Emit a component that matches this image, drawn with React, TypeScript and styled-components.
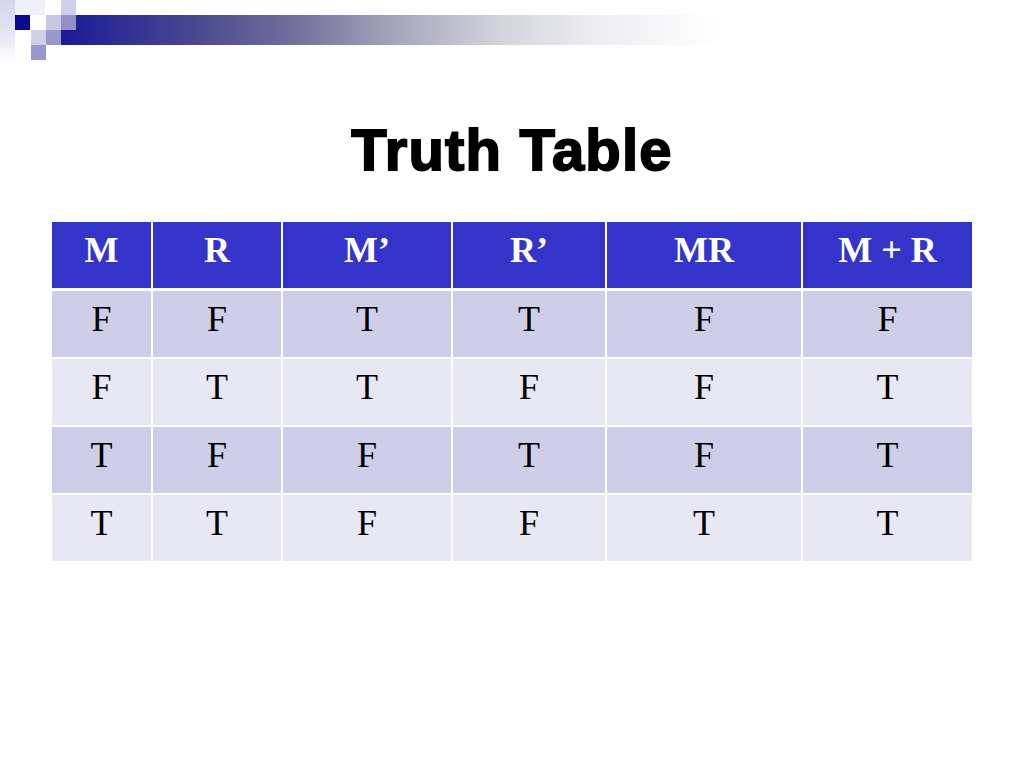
import React from "react";
import styled, { createGlobalStyle } from "styled-components";

const Global = createGlobalStyle`
  html, body { margin: 0; padding: 0; background: #ffffff; }
  body { width: 1024px; height: 768px; overflow: hidden; }
`;

const Page = styled.div`
  width: 1024px;
  height: 768px;
  background: #ffffff;
  display: flex;
  flex-direction: column;
`;

const Banner = styled.svg`
  display: block;
  width: 1024px;
  height: 60px;
  flex: none;
`;

const Title = styled.h1`
  margin: 61px 0 0 0;
  font-family: "Liberation Sans", Arial, sans-serif;
  font-weight: 700;
  font-size: 58px;
  line-height: 58px;
  height: 58px;
  text-align: center;
  color: #000;
  -webkit-text-stroke: 1.8px #000;
  letter-spacing: 1.2px;
`;

const Table = styled.div`
  margin: 43px 0 0 52px;
  width: 920px;
  display: flex;
  flex-direction: column;
  gap: 2px;
`;

const Row = styled.div<{ $head?: boolean }>`
  display: grid;
  grid-template-columns: 99px 128px 168px 152px 194px 169px;
  column-gap: 2px;
  margin-bottom: ${(p) => (p.$head ? "1px" : "0")};
`;

type Variant = "head" | "odd" | "even";

const bg: Record<Variant, string> = {
  head: "#3434cb",
  odd: "#cecee9",
  even: "#e8e8f4",
};

const Cell = styled.div<{ $v: Variant }>`
  height: 66px;
  box-sizing: border-box;
  padding-top: 10px;
  background: ${(p) => bg[p.$v]};
  color: ${(p) => (p.$v === "head" ? "#ffffff" : "#000000")};
  font-family: "Liberation Serif", "Times New Roman", serif;
  font-weight: ${(p) => (p.$v === "head" ? 700 : 400)};
  font-size: 36px;
  line-height: 36px;
  text-align: center;
`;

const headers = ["M", "R", "M\u2019", "R\u2019", "MR", "M + R"];
const rows = [
  ["F", "F", "T", "T", "F", "F"],
  ["F", "T", "T", "F", "F", "T"],
  ["T", "F", "F", "T", "F", "T"],
  ["T", "T", "F", "F", "T", "T"],
];

function Decoration() {
  return (
    <Banner viewBox="0 0 1024 60">
      <defs>
        <linearGradient id="bar" x1="61" y1="0" x2="720" y2="0" gradientUnits="userSpaceOnUse">
          <stop offset="0" stopColor="#1a1a98" />
          <stop offset="0.21" stopColor="#4a4a90" />
          <stop offset="0.36" stopColor="#74719c" />
          <stop offset="0.51" stopColor="#a6a6bc" />
          <stop offset="0.67" stopColor="#d4d4de" />
          <stop offset="0.82" stopColor="#eeeef3" />
          <stop offset="1" stopColor="#ffffff" />
        </linearGradient>
        <linearGradient id="strip" x1="0" y1="0" x2="0" y2="60" gradientUnits="userSpaceOnUse">
          <stop offset="0" stopColor="#d6d6ee" />
          <stop offset="0.6" stopColor="#e6e6f4" />
          <stop offset="1" stopColor="#ffffff" />
        </linearGradient>
      </defs>
      <rect x="0" y="0" width="15" height="60" fill="url(#strip)" />
      <rect x="15" y="0" width="30" height="15" fill="#f0f0f8" />
      <rect x="61" y="15" width="700" height="30" fill="url(#bar)" />
      <rect x="15" y="15" width="15" height="15" fill="#0a0a8c" />
      <rect x="46" y="15" width="15" height="15" fill="#c8c8e4" />
      <rect x="61" y="0" width="15" height="15" fill="#d0d0ea" />
      <rect x="61" y="15" width="15" height="15" fill="#9292ca" />
      <rect x="31" y="30" width="15" height="15" fill="#d0d0e8" />
      <rect x="46" y="30" width="15" height="15" fill="#9898cc" />
      <rect x="31" y="45" width="15" height="15" fill="#9898cc" />
    </Banner>
  );
}

export default function App() {
  return (
    <Page>
      <Global />
      <Decoration />
      <Title>Truth Table</Title>
      <Table>
        <Row $head>
          {headers.map((h) => (
            <Cell key={h} $v="head">
              {h}
            </Cell>
          ))}
        </Row>
        {rows.map((r, i) => (
          <Row key={i}>
            {r.map((c, j) => (
              <Cell key={j} $v={i % 2 === 0 ? "odd" : "even"}>
                {c}
              </Cell>
            ))}
          </Row>
        ))}
      </Table>
    </Page>
  );
}
